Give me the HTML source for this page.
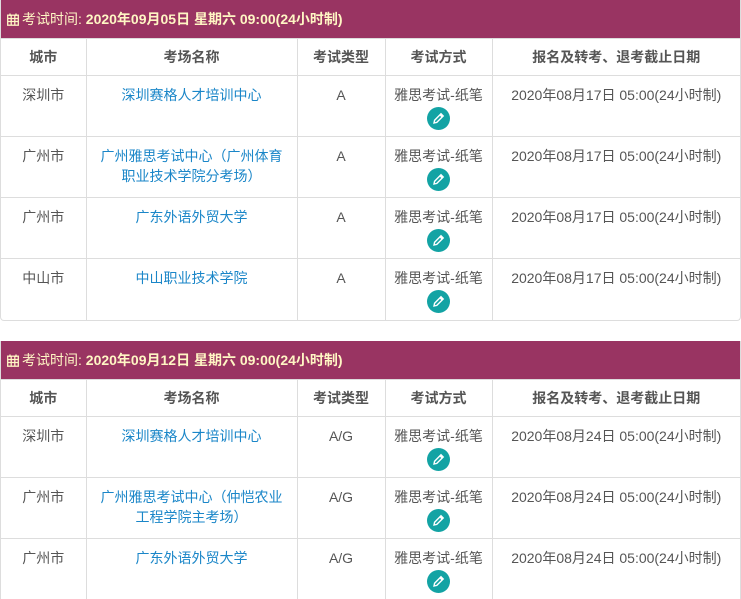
<!DOCTYPE html>
<html><head><meta charset="utf-8"><style>
*{margin:0;padding:0;box-sizing:border-box}
html,body{width:741px;height:599px;overflow:hidden}
body{background:#fff;font-family:"Liberation Sans","Noto Sans CJK SC",sans-serif;font-size:14px;color:#555;position:relative}
.blk{position:absolute;left:0;width:741px;border:1px solid #ddd;border-top:none;border-radius:0 0 4px 4px;overflow:hidden}
.hd{height:38px;background:#993462;color:#fff6c4;font-size:14px;line-height:38px;padding-left:7px;margin:0 -1px}
.hd b{font-weight:bold}
table{border-collapse:collapse;width:739px;table-layout:fixed}
td,th{border-right:1px solid #ddd;border-top:1px solid #ddd;text-align:center;vertical-align:top}
td:last-child,th:last-child{border-right:none}
th{height:37px;line-height:36px;font-weight:bold;color:#555}
td{height:61px;padding-top:9px;line-height:20px}
a{color:#1a86c8;text-decoration:none}
.ic{display:inline-block;width:23px;height:23px;border-radius:50%;background:#13a3a4;margin-top:2px;vertical-align:top;position:relative}
.ic svg{position:absolute;left:5px;top:5px}
.cal{display:inline-block;vertical-align:-2px;margin-right:3px}
</style></head><body>
<div class="blk" style="top:0">
<div class="hd"><svg class="cal" width="12" height="13" viewBox="0 0 12 13"><g fill="none" stroke="#fff6c4" stroke-width="1.3"><rect x="0.7" y="2.2" width="10.6" height="10"/><path d="M0.7 5.5H11.3M0.7 8.5H11.3M4.2 2.2V12.2M7.8 2.2V12.2M3 0.5V3M9 0.5V3"/></g></svg>考试时间: <b>2020年09月05日 星期六 09:00(24小时制)</b></div>
<table><colgroup><col style="width:85px"><col style="width:211px"><col style="width:88px"><col style="width:107px"><col></colgroup>
<tr><th>城市</th><th>考场名称</th><th>考试类型</th><th>考试方式</th><th>报名及转考、退考截止日期</th></tr>
<tr><td>深圳市</td><td><a>深圳赛格人才培训中心</a></td><td>A</td><td>雅思考试-纸笔<br><span class="ic"><svg width="13" height="13" viewBox="0 0 13 13"><path d="M2 11l.6-2.8L9 1.8l2.2 2.2-6.4 6.4zM8 2.8l2.2 2.2" fill="none" stroke="#fff" stroke-width="1.4"/></svg></span></td><td>2020年08月17日 05:00(24小时制)</td></tr>
<tr><td>广州市</td><td><a>广州雅思考试中心（广州体育<br>职业技术学院分考场）</a></td><td>A</td><td>雅思考试-纸笔<br><span class="ic"><svg width="13" height="13" viewBox="0 0 13 13"><path d="M2 11l.6-2.8L9 1.8l2.2 2.2-6.4 6.4zM8 2.8l2.2 2.2" fill="none" stroke="#fff" stroke-width="1.4"/></svg></span></td><td>2020年08月17日 05:00(24小时制)</td></tr>
<tr><td>广州市</td><td><a>广东外语外贸大学</a></td><td>A</td><td>雅思考试-纸笔<br><span class="ic"><svg width="13" height="13" viewBox="0 0 13 13"><path d="M2 11l.6-2.8L9 1.8l2.2 2.2-6.4 6.4zM8 2.8l2.2 2.2" fill="none" stroke="#fff" stroke-width="1.4"/></svg></span></td><td>2020年08月17日 05:00(24小时制)</td></tr>
<tr><td>中山市</td><td><a>中山职业技术学院</a></td><td>A</td><td>雅思考试-纸笔<br><span class="ic"><svg width="13" height="13" viewBox="0 0 13 13"><path d="M2 11l.6-2.8L9 1.8l2.2 2.2-6.4 6.4zM8 2.8l2.2 2.2" fill="none" stroke="#fff" stroke-width="1.4"/></svg></span></td><td>2020年08月17日 05:00(24小时制)</td></tr>
</table></div>
<div class="blk" style="top:341px;height:270px">
<div class="hd"><svg class="cal" width="12" height="13" viewBox="0 0 12 13"><g fill="none" stroke="#fff6c4" stroke-width="1.3"><rect x="0.7" y="2.2" width="10.6" height="10"/><path d="M0.7 5.5H11.3M0.7 8.5H11.3M4.2 2.2V12.2M7.8 2.2V12.2M3 0.5V3M9 0.5V3"/></g></svg>考试时间: <b>2020年09月12日 星期六 09:00(24小时制)</b></div>
<table><colgroup><col style="width:85px"><col style="width:211px"><col style="width:88px"><col style="width:107px"><col></colgroup>
<tr><th>城市</th><th>考场名称</th><th>考试类型</th><th>考试方式</th><th>报名及转考、退考截止日期</th></tr>
<tr><td>深圳市</td><td><a>深圳赛格人才培训中心</a></td><td>A/G</td><td>雅思考试-纸笔<br><span class="ic"><svg width="13" height="13" viewBox="0 0 13 13"><path d="M2 11l.6-2.8L9 1.8l2.2 2.2-6.4 6.4zM8 2.8l2.2 2.2" fill="none" stroke="#fff" stroke-width="1.4"/></svg></span></td><td>2020年08月24日 05:00(24小时制)</td></tr>
<tr><td>广州市</td><td><a>广州雅思考试中心（仲恺农业<br>工程学院主考场）</a></td><td>A/G</td><td>雅思考试-纸笔<br><span class="ic"><svg width="13" height="13" viewBox="0 0 13 13"><path d="M2 11l.6-2.8L9 1.8l2.2 2.2-6.4 6.4zM8 2.8l2.2 2.2" fill="none" stroke="#fff" stroke-width="1.4"/></svg></span></td><td>2020年08月24日 05:00(24小时制)</td></tr>
<tr><td>广州市</td><td><a>广东外语外贸大学</a></td><td>A/G</td><td>雅思考试-纸笔<br><span class="ic"><svg width="13" height="13" viewBox="0 0 13 13"><path d="M2 11l.6-2.8L9 1.8l2.2 2.2-6.4 6.4zM8 2.8l2.2 2.2" fill="none" stroke="#fff" stroke-width="1.4"/></svg></span></td><td>2020年08月24日 05:00(24小时制)</td></tr>
</table></div>
</body></html>
